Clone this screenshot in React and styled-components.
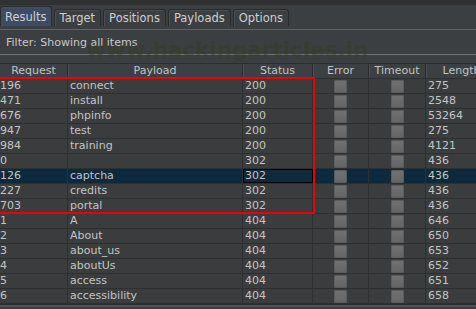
import styled, { createGlobalStyle } from "styled-components";

const GlobalStyle = createGlobalStyle`
  html, body {
    margin: 0;
    padding: 0;
    background: #3c3f41;
  }
  body {
    font-family: "DejaVu Sans", "Liberation Sans", sans-serif;
    font-size: 11px;
    color: #c4c4c4;
  }
`;

const columns = "68px 175px 70px 56px 57px 72px";

const rows = [
  ["196", "connect", "200", "275"],
  ["471", "install", "200", "2548"],
  ["676", "phpinfo", "200", "53264"],
  ["947", "test", "200", "275"],
  ["984", "training", "200", "4121"],
  ["0", "", "302", "436"],
  ["126", "captcha", "302", "436"],
  ["227", "credits", "302", "436"],
  ["703", "portal", "302", "436"],
  ["1", "A", "404", "646"],
  ["2", "About", "404", "650"],
  ["3", "about_us", "404", "653"],
  ["4", "aboutUs", "404", "652"],
  ["5", "access", "404", "651"],
  ["6", "accessibility", "404", "658"],
];

const tabs = ["Results", "Target", "Positions", "Payloads", "Options"];

const Page = styled.div`
  position: relative;
  width: 476px;
  height: 309px;
  overflow: hidden;
`;

const TopStrip = styled.div`
  height: 5px;
  background: #2f3133;
`;

const TabBar = styled.div`
  display: flex;
  gap: 2px;
  height: 24px;
  border-bottom: 1px solid #5f6163;
`;

const Tab = styled.div`
  box-sizing: border-box;
  height: ${(p) => (p.$active ? "20px" : "17px")};
  margin-top: ${(p) => (p.$active ? "1px" : "4px")};
  padding: 0 ${(p) => (p.$active ? "4px" : "5px")};
  display: flex;
  align-items: center;
  font-size: 11.5px;
  color: #cfcfcf;
  background: ${(p) => (p.$active ? "#3e4b63" : "#3c3f41")};
  border: 1px solid #2a2b2c;
  border-bottom: none;
  border-radius: 3px 3px 0 0;
  box-shadow: inset 1px 1px 0 #4b4e51;
`;

const FilterBar = styled.div`
  height: 24px;
  display: flex;
  align-items: center;
  padding-left: 6px;
  border-bottom: 1px solid #707274;
  color: #c8c8c8;
`;

const Spacer = styled.div`
  height: 8px;
`;

const Table = styled.div`
  border-top: 1px solid #2c2d2e;
`;

const Row = styled.div`
  display: grid;
  grid-template-columns: ${columns};
  height: 15px;
  background: ${(p) => (p.$selected ? "#0d293e" : "#3a3c3e")};
  border-bottom: 1px solid #2d2f31;
  box-sizing: border-box;
`;

const HeaderRow = styled(Row)`
  background: #3d4042;
  height: 15px;
  border-bottom: 1px solid #2d2f31;
`;

const HeaderCell = styled.div`
  display: flex;
  align-items: center;
  justify-content: center;
  border-right: 1px solid #2a2b2c;
  box-shadow: 1px 0 0 #4c4f52;
  color: #c2c2c2;
  white-space: nowrap;
  overflow: hidden;
  line-height: 14px;
`;

const Cell = styled.div`
  box-sizing: border-box;
  display: flex;
  align-items: center;
  padding-left: ${(p) => (p.$first ? "0" : "2px")};
  border-right: 1px solid #2d2f31;
  white-space: nowrap;
  overflow: hidden;
  line-height: 14px;
  color: #c4c4c4;
  ${(p) => p.$focus && "outline: 1px solid #000; outline-offset: -1px;"}
`;

const CheckCell = styled(Cell)`
  justify-content: center;
  padding-left: 0;
`;

const Check = styled.div`
  width: 13px;
  height: 13px;
  border-radius: 2px;
  background: linear-gradient(#727272, #646464);
  box-shadow: inset 0 0 0 1px #5c5c5c;
`;

const Highlight = styled.div`
  position: absolute;
  left: -4px;
  top: 77px;
  width: 315px;
  height: 133px;
  border: 2px solid #ee0000;
  pointer-events: none;
`;

const Watermark = styled.div`
  position: absolute;
  left: 86px;
  top: 37px;
  font-size: 21.5px;
  font-weight: bold;
  color: rgba(50, 60, 25, 0.38);
  white-space: nowrap;
  pointer-events: none;
`;

const ScrollBar = styled.div`
  height: 2px;
  background: #505355;
  border-top: 1px solid #2d2f31;
`;

export default function App() {
  return (
    <>
      <GlobalStyle />
      <Page>
        <TopStrip />
        <TabBar>
          {tabs.map((t, i) => (
            <Tab key={t} $active={i === 0}>
              {t}
            </Tab>
          ))}
        </TabBar>
        <FilterBar>Filter: Showing all items</FilterBar>
        <Spacer />
        <Table>
          <HeaderRow>
            <HeaderCell>Request</HeaderCell>
            <HeaderCell>Payload</HeaderCell>
            <HeaderCell>Status</HeaderCell>
            <HeaderCell>Error</HeaderCell>
            <HeaderCell>Timeout</HeaderCell>
            <HeaderCell>Length</HeaderCell>
          </HeaderRow>
          {rows.map((r, i) => (
            <Row key={r[0]} $selected={i === 6}>
              <Cell $first>{r[0]}</Cell>
              <Cell>{r[1]}</Cell>
              <Cell $focus={i === 6}>{r[2]}</Cell>
              <CheckCell>
                <Check />
              </CheckCell>
              <CheckCell>
                <Check />
              </CheckCell>
              <Cell>{r[3]}</Cell>
            </Row>
          ))}
          <ScrollBar />
        </Table>
        <Watermark>www.hackingarticles.in</Watermark>
        <Highlight />
      </Page>
    </>
  );
}
